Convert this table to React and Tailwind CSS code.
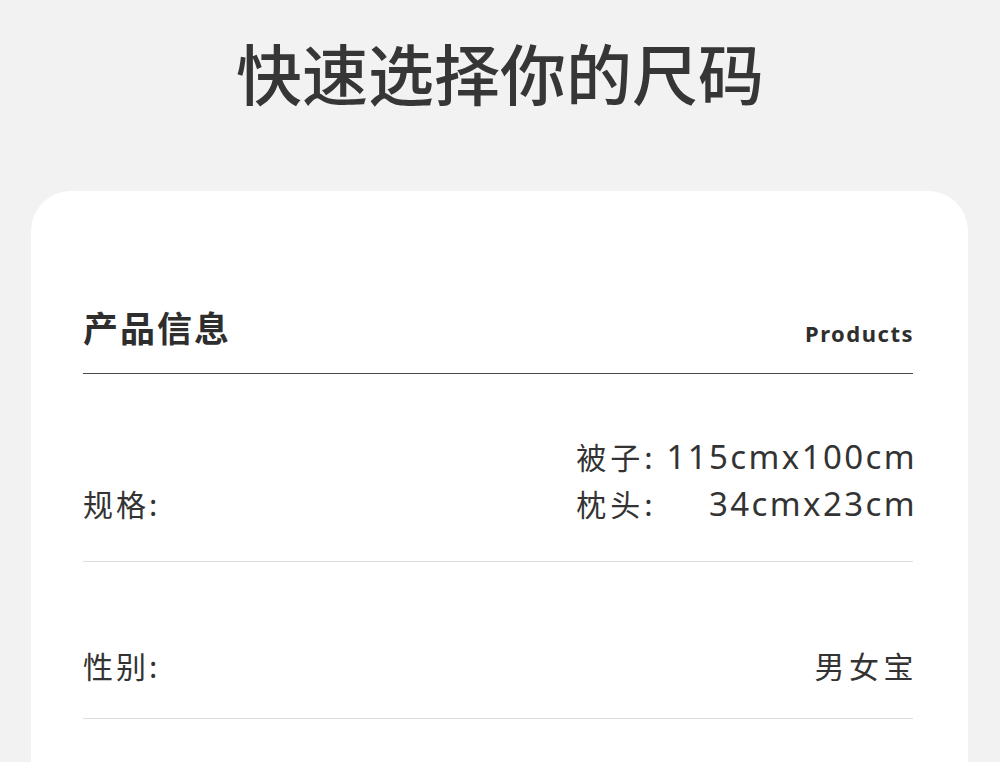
import React from "react";

const rows = [
  {
    label: "规格:",
    values: [
      ["被子:", "115cmx100cm"],
      ["枕头:", "34cmx23cm"],
    ],
    pad: "pt-[59px] pb-[34px]",
  },
  {
    label: "性别:",
    values: [["", "男女宝"]],
    pad: "pt-[80px] pb-[29px]",
  },
];

const latin = { fontFamily: '"Noto Sans", sans-serif' };

export default function App() {
  return (
    <div
      className="min-h-[762px] overflow-hidden bg-[#f2f2f2] text-[#333333]"
      style={{ fontFamily: '"Noto Sans CJK SC", "Noto Sans", sans-serif' }}
    >
      <h1 className="pt-[38px] text-center text-[66px] font-medium leading-none text-[#363636]">
        快速选择你的尺码
      </h1>

      <section className="ml-[31px] mr-[32px] mt-[87px] rounded-t-[40px] bg-white pl-[52px] pr-[55px] pt-[118px] pb-[60px]">
        <div className="flex items-end justify-between border-b border-[#4a4a4a] pb-[29px]">
          <h2 className="text-[35px] font-bold leading-none tracking-[2px] text-[#2e2e2e]">产品信息</h2>
          <span
            className="mr-[-1px] text-[22px] font-bold leading-none tracking-[1.5px] text-[#2e2e2e]"
            style={latin}
          >
            Products
          </span>
        </div>

        {rows.map((row) => (
          <div
            key={row.label}
            className={`flex items-end justify-between border-b border-[#dddddd] ${row.pad}`}
          >
            <span className="text-[30px] leading-[47px] tracking-[3px]">{row.label}</span>
            <div className={row.values[0][0] ? "mr-[-4px]" : "mr-[-5px]"}>
              {row.values.map(([name, value]) =>
                name ? (
                  <div
                    key={value}
                    className="flex h-[47px] items-baseline justify-between gap-[10px] overflow-hidden leading-[47px]"
                  >
                    <span className="text-[30px] tracking-[4px]">{name}</span>
                    <span className="text-[33px] tracking-[2.4px]" style={latin}>
                      {value}
                    </span>
                  </div>
                ) : (
                  <div key={value} className="text-[30px] leading-[47px] tracking-[4.5px]">
                    {value}
                  </div>
                )
              )}
            </div>
          </div>
        ))}
      </section>
    </div>
  );
}
